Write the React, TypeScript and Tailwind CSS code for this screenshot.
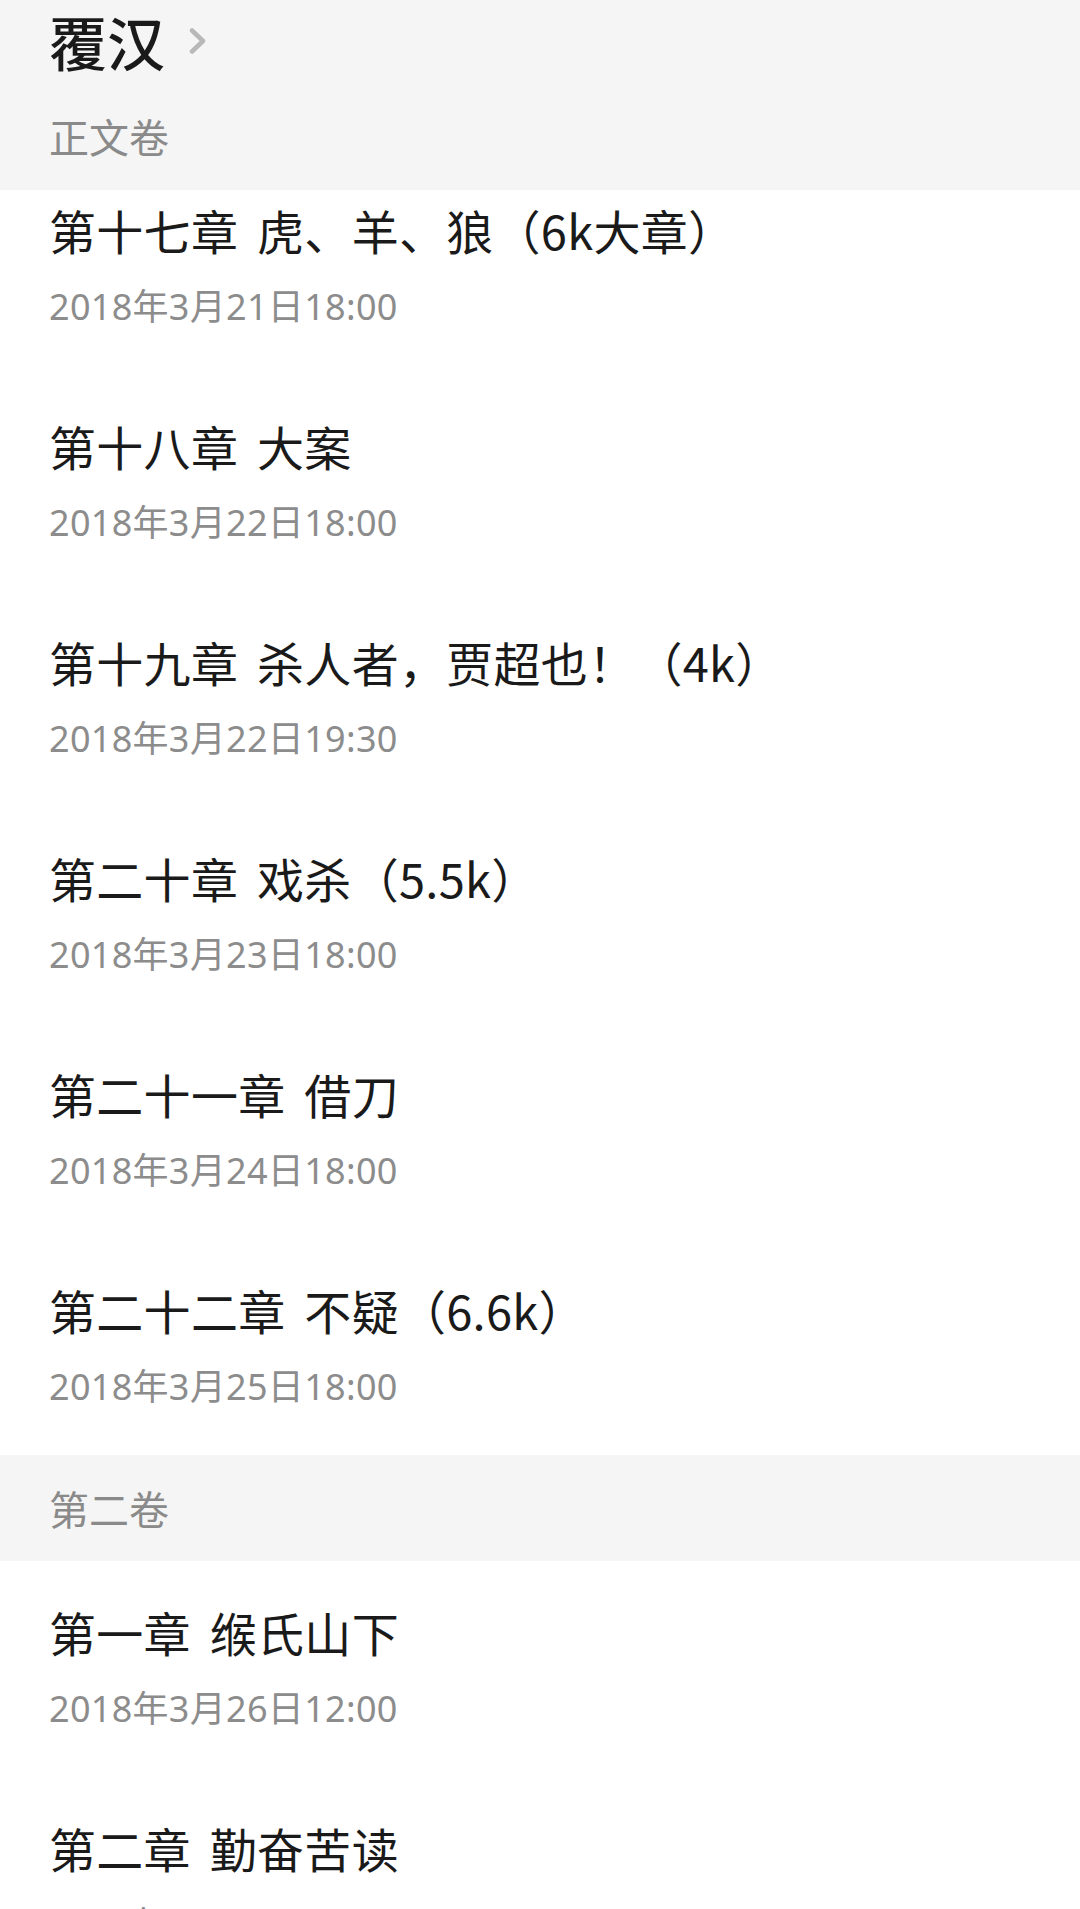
import React from 'react';

const volumes = [
  {
    name: '',
    chapters: [
      { title: '第十七章 虎、羊、狼（6k大章）', date: '2018年3月21日18:00' },
      { title: '第十八章 大案', date: '2018年3月22日18:00' },
      { title: '第十九章 杀人者，贾超也！（4k）', date: '2018年3月22日19:30' },
      { title: '第二十章 戏杀（5.5k）', date: '2018年3月23日18:00' },
      { title: '第二十一章 借刀', date: '2018年3月24日18:00' },
      { title: '第二十二章 不疑（6.6k）', date: '2018年3月25日18:00' },
    ],
  },
  {
    name: '第二卷',
    chapters: [
      { title: '第一章 缑氏山下', date: '2018年3月26日12:00' },
      { title: '第二章 勤奋苦读', date: '2018年3月27日12:00' },
    ],
  },
];

const ChapterRow = ({ title, date }: { title: string; date: string }) => (
  <div className="h-[216px] pl-[49px] pt-[41px]">
    <div className="text-[47px] leading-[60px] tracking-[0.3px] [word-spacing:8px] text-[#1a1a1a] whitespace-nowrap">
      {title}
    </div>
    <div
      className="mt-[27px] text-[36px] leading-[40px] tracking-[0.3px] text-[#8c8c8c] whitespace-nowrap"
      style={{ fontFamily: '"Noto Sans", "Noto Sans CJK SC", sans-serif' }}
    >
      {date}
    </div>
  </div>
);

export default function App() {
  return (
    <div
      className="w-[1080px] h-[1909px] overflow-hidden bg-white"
      style={{ fontFamily: '"Noto Sans CJK SC", "Noto Sans", sans-serif' }}
    >
      {/* sticky header over the scrolled list */}
      <div className="relative z-10 h-[190px] bg-[#f5f5f5]">
        <div className="flex h-[82px] items-center pl-[49px]">
          <span className="text-[58px] leading-none font-medium text-[#1a1a1a]">覆汉</span>
          <svg className="ml-[24px]" width="17" height="26" viewBox="0 0 17 26" fill="none">
            <polyline
              points="3,2.5 14,13 3,23.5"
              stroke="#b8b8b8"
              strokeWidth="4.5"
              strokeLinecap="round"
              strokeLinejoin="round"
            />
          </svg>
        </div>
        <div className="flex h-[108px] items-center pl-[49px] text-[40px] leading-none text-[#8a8a8a]">
          正文卷
        </div>
      </div>

      <div className="-mt-[31px]">
        {volumes.map((vol, i) => (
          <div key={i}>
            {vol.name && (
              <div className="flex h-[106px] items-center bg-[#f5f5f5] pl-[49px] text-[40px] leading-none text-[#8a8a8a]">
                {vol.name}
              </div>
            )}
            {vol.chapters.map((c) => (
              <ChapterRow key={c.title} title={c.title} date={c.date} />
            ))}
          </div>
        ))}
      </div>
    </div>
  );
}
